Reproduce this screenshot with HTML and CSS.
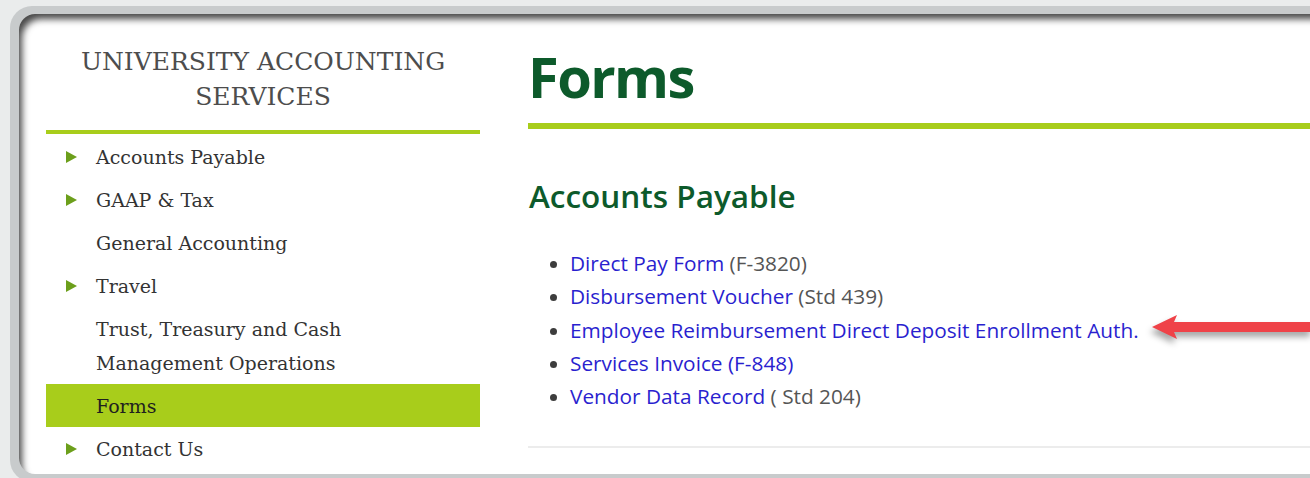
FILE: index.html
```html
<!DOCTYPE html>
<html lang="en">
<head>
<meta charset="utf-8">
<title>Forms | University Accounting Services</title>
<link rel="stylesheet" href="styles.css">
</head>
<body>
<div class="frame">
  <div class="panel">
    <aside class="sidebar">
      <h2 class="site-title">UNIVERSITY ACCOUNTING SERVICES</h2>
      <ul class="nav">
        <li class="nav-item has-sub">Accounts Payable</li>
        <li class="nav-item has-sub">GAAP &amp; Tax</li>
        <li class="nav-item">General Accounting</li>
        <li class="nav-item has-sub">Travel</li>
        <li class="nav-item">Trust, Treasury and Cash Management Operations</li>
        <li class="nav-item active">Forms</li>
        <li class="nav-item has-sub">Contact Us</li>
      </ul>
    </aside>
    <main class="content">
      <h1 class="page-title">Forms</h1>
      <h2 class="section-title">Accounts Payable</h2>
      <ul class="form-list">
        <li><a href="#">Direct Pay Form</a> (F-3820)</li>
        <li><a href="#">Disbursement Voucher</a> (Std 439)</li>
        <li><a href="#">Employee Reimbursement Direct Deposit Enrollment Auth.</a></li>
        <li><a href="#">Services Invoice (F-848)</a></li>
        <li><a href="#">Vendor Data Record</a> ( Std 204)</li>
      </ul>
      <hr class="rule">
    </main>
    <svg class="pointer" width="162" height="36" viewBox="0 0 162 36" aria-hidden="true">
      <polygon points="2,15 27,3 24,10 162,10 162,20 24,20 27,27" fill="#ef4248"/>
    </svg>
  </div>
</div>
</body>
</html>
```

FILE: styles.css
```css
html, body {
  margin: 0;
  padding: 0;
}

body {
  background: #eaecec;
  width: 1310px;
  height: 478px;
  overflow: hidden;
}

.frame {
  margin: 6px 0 0 10px;
  width: 1330px;
  height: 476px;
  padding: 8px 0 0 9px;
  box-sizing: border-box;
  background: #c8cbcc;
  border-radius: 22px 0 0 22px;
}

.panel {
  position: relative;
  height: 460px;
  background: #ffffff;
  border-radius: 16px 0 0 16px;
  box-shadow: inset 6px 8px 7px -3px rgba(0, 0, 0, 0.72);
  display: flex;
  gap: 48px;
  padding: 30px 0 0 27px;
  box-sizing: border-box;
}

/* ---------- sidebar ---------- */
.sidebar {
  width: 434px;
  flex: none;
  font-family: "DejaVu Serif", serif;
}

.site-title {
  margin: 0;
  padding: 0 0 16px;
  border-bottom: 4px solid #a8cd1b;
  text-align: center;
  font-size: 25px;
  font-weight: normal;
  line-height: 35px;
  color: #4d4d4d;
}

.nav {
  list-style: none;
  margin: 1px 0 0;
  padding: 0;
}

.nav-item {
  position: relative;
  padding: 4.5px 20px 4.5px 50px;
  font-size: 19px;
  line-height: 34px;
  color: #333333;
}

.nav-item.has-sub::before {
  content: "";
  position: absolute;
  left: 20px;
  top: 50%;
  margin-top: -6px;
  border-style: solid;
  border-width: 6.5px 0 6.5px 11px;
  border-color: transparent transparent transparent #6c9f1b;
}

.nav-item.active {
  background: #a8cd1b;
  color: #1f1f1f;
}

/* ---------- main content ---------- */
.content {
  flex: 1;
  font-family: "Open Sans", sans-serif;
}

.page-title {
  margin: 0;
  padding-bottom: 15px;
  border-bottom: 6px solid #a8cd1b;
  font-size: 56px;
  line-height: 64px;
  font-weight: 700;
  letter-spacing: -1.6px;
  color: #0d5a2b;
}

.section-title {
  margin: 47px 0 0 1px;
  font-size: 31.5px;
  line-height: 40px;
  font-weight: 600;
  color: #0d5a2b;
}

.form-list {
  margin: 31px 0 0;
  padding: 0 0 0 42px;
  list-style: disc;
  font-size: 20.8px;
  line-height: 33.3px;
  color: #555555;
}

.form-list li::marker {
  color: #3d3d3d;
  font-size: 19px;
}

.form-list a {
  color: #2a1fcf;
  text-decoration: none;
}

.rule {
  margin: 33px 0 0;
  border: 0;
  border-top: 2px solid #ececec;
}

.pointer {
  position: absolute;
  left: 1131px;
  top: 298px;
  filter: drop-shadow(-2px 5px 3px rgba(0, 0, 0, 0.35));
}
```
